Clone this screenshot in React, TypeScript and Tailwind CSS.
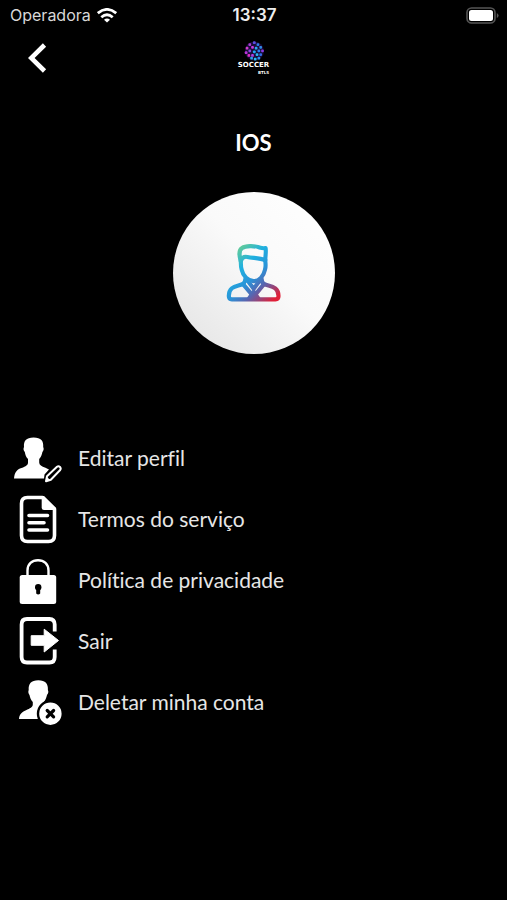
import type { ReactNode } from "react";

const menu: { label: string; icon: ReactNode }[] = [
  {
    label: "Editar perfil",
    icon: (
      <>
        <path
          fill="#fff"
          d="M0 44.5C.5 38 3 35.500 7.500 34C12 32.400 14 31 14 28.500V25C12 23 11.200 20.500 10.800 18C9.400 16.500 9.200 14.500 10 13C9.600 7 12 3.500 19.600 3.500S29.600 7 29.200 13C30 14.500 29.800 16.500 28.400 18C28 20.500 27 23 25.200 25V28.500C25.200 31 27.500 32.400 31.500 33.800L35 35.500L30.500 40.500L30 44.500Z"
        />
        <path
          fill="#000"
          stroke="#fff"
          strokeWidth="2"
          strokeLinejoin="round"
          d="M32 47.300L33 42.200L43 32.800Q44.500 31.700 46 33Q47.300 34.500 46.200 36L36.800 45.700Z"
        />
        <path fill="#fff" d="M32 47.300L32.800 42.800L36.400 46.200Z" />
      </>
    ),
  },
  {
    label: "Termos do serviço",
    icon: (
      <>
        <path
          fill="none"
          stroke="#fff"
          strokeWidth="3.600"
          strokeLinejoin="round"
          d="M28.500 2.500H13.500Q7.500 2.500 7.500 8.500V40.500Q7.500 46.500 13.500 46.500H34.500Q40.500 46.500 40.500 40.500V14Z"
        />
        <path fill="#fff" d="M27.700 1H30L42 13V15H30Q27.700 15 27.700 12.700Z" />
        <path
          stroke="#fff"
          strokeWidth="3.600"
          strokeLinecap="round"
          d="M15 20.500H33.500M15 27.700H30M15 35H33.500"
        />
      </>
    ),
  },
  {
    label: "Política de privacidade",
    icon: (
      <>
        <path
          fill="none"
          stroke="#fff"
          strokeWidth="2.400"
          d="M13.500 21V14.500C13.500 8 18 4.200 24 4.200S34.500 8 34.500 14.500V21"
        />
        <rect x="5.700" y="19" width="36.500" height="29" rx="2.500" fill="#fff" />
        <circle cx="24.200" cy="31.300" r="3.200" fill="#000" />
        <path fill="#000" d="M22.200 32H26.200V37.500Q24.200 39.500 22.200 37.500Z" />
      </>
    ),
  },
  {
    label: "Sair",
    icon: (
      <>
        <path
          fill="none"
          stroke="#fff"
          strokeWidth="3.800"
          d="M40.700 14.500V7.500Q40.700 2 35.500 2H13Q7.600 2 7.600 7.500V40Q7.600 45.500 13 45.500H35.500Q40.700 45.500 40.700 40V32.500"
        />
        <path
          fill="#fff"
          stroke="#fff"
          strokeWidth="1"
          strokeLinejoin="round"
          d="M17.200 18.700H30.200V12.200L44.500 23.500L30.200 35V28.300H17.200Z"
        />
      </>
    ),
  },
  {
    label: "Deletar minha conta",
    icon: (
      <>
        <path
          fill="#fff"
          d="M5 41C5.300 36.500 7.500 34 12 32.200C16 30.500 18.800 29 18.800 26.500V24C17 22 15.900 19.500 15.500 17C14.300 15.500 14 13.500 14.700 12C14.300 6 17 2.300 24.300 2.300S34.300 6 33.900 12C34.700 13.500 34.400 15.500 33 17C32.500 19.500 31.500 22 29.800 24L30 41Z"
        />
        <circle cx="36.400" cy="35.700" r="12.400" fill="#fff" stroke="#000" strokeWidth="2.400" />
        <path
          stroke="#000"
          strokeWidth="3.200"
          strokeLinecap="round"
          d="M33.200 32.500L39.600 38.900M39.600 32.500L33.200 38.900"
        />
      </>
    ),
  },
];

const ballPatches = [
  [10, 1, "#5b4be0"], [5, 3, "#a83ad8"], [14, 3, "#2f7be8"], [2, 7, "#d13ad0"],
  [8, 6, "#c83be0"], [12, 7, "#2aa8f0"], [17, 6, "#2f8be8"], [5, 10, "#8a45e0"],
  [10, 11, "#22a6f5"], [15, 10, "#2d7cf0"], [19, 10, "#8a3ae0"], [1, 12, "#b832d8"],
  [4, 15, "#e02cc8"], [8, 15, "#b23ae0"], [13, 14, "#28b4f0"], [17, 14, "#2f6be8"],
  [7, 18, "#2f9be8"], [11, 19, "#22b8f5"], [15, 18, "#2a8df0"],
] as const;

function StatusBar() {
  return (
    <div className="grid h-[30px] grid-cols-3 items-center pr-2 pl-[10px] font-['Inter',sans-serif] leading-[30px]">
      <div className="flex items-center gap-[6px] text-[16px] text-[#d8d8d8]">
        <span>Operadora</span>
        <svg className="h-[15px] w-5 shrink-0" viewBox="0 0 20 15" fill="none" stroke="#fff" strokeWidth="2.800">
          <path d="M.8 5.200Q10-2.400 19.200 5.200" />
          <path d="M4.300 9.200Q10 4.300 15.700 9.200" />
          <path d="M10 14.600L7 11.700Q10 9.200 13 11.700Z" fill="#fff" stroke="none" />
        </svg>
      </div>
      <time className="text-center text-[17px] font-semibold text-[#eee]">13:37</time>
      <svg className="h-[17px] w-[33px] justify-self-end" viewBox="0 0 33 17">
        <rect x="1" y="1" width="28" height="15" rx="4.500" fill="none" stroke="#555" strokeWidth="1.600" />
        <rect x="3" y="3" width="24" height="11" rx="2.500" fill="#fff" />
        <path d="M30.800 6V11Q32.600 10 32.600 8.500T30.800 6Z" fill="#555" />
      </svg>
    </div>
  );
}

export default function App() {
  return (
    <main className="min-h-screen bg-black font-['Lato',sans-serif] text-white">
      <StatusBar />

      <header className="grid h-14 grid-cols-3 items-center px-5">
        <button type="button" aria-label="Voltar" className="flex h-9 w-9 items-center pl-2">
          <svg className="h-[30px] w-5" viewBox="0 0 20 30" fill="none" stroke="#fff" strokeWidth="4.600">
            <path d="M16.500 2L3.200 15L16.500 28" />
          </svg>
        </button>
        <div className="flex flex-col items-center">
          <svg className="h-5 w-[23px]" viewBox="-2 0 24 22">
            <circle cx="11" cy="11" r="10.500" fill="#180c38" />
            {ballPatches.map(([x, y, color]) => (
              <rect key={`${x}-${y}`} x={x - 0.6} y={y - 0.6} width="3" height="3" rx="1" fill={color} />
            ))}
          </svg>
          <div className="flex flex-col items-end font-['DejaVu_Sans',sans-serif] font-bold">
            <span className="text-[7px] leading-[9px]">SOCCER</span>
            <span className="text-[4px] leading-[5px]">BTLS</span>
          </div>
        </div>
      </header>

      <section className="flex flex-col items-center pt-[42px]">
        <h1 className="text-[22px] leading-[30px] font-bold">IOS</h1>
        <div className="mt-[34px] flex h-[162px] w-[162px] items-center justify-center rounded-full bg-linear-to-tr from-[#e2e2e2] via-[#fafafa] via-55% to-white">
          <svg
            className="h-[58px] w-[55px]"
            viewBox="50 55 165 175"
            fill="none"
            stroke="url(#avatar)"
            strokeWidth="12.500"
            strokeLinejoin="round"
            strokeLinecap="round"
          >
            <defs>
              <linearGradient id="avatar" gradientUnits="userSpaceOnUse" x1="85" y1="75" x2="208" y2="210">
                <stop offset="0" stopColor="#5cc9a0" />
                <stop offset="0.250" stopColor="#1fb0e0" />
                <stop offset="0.500" stopColor="#2a94d8" />
                <stop offset="0.700" stopColor="#5865b0" />
                <stop offset="1" stopColor="#e01f38" />
              </linearGradient>
            </defs>
            <path d="M169 67C162 69 156 67 149 65C135 60 108 60 98 67C86 75 90 92 94 107C98 94 105 92 114 94C130 98 150 96 168 104C168 92 171 80 169 67Z" />
            <path d="M94 102C95 112 93 122 97 133C101 152 116 167 133 167S163 152 167 133C171 121 168 112 168 102" />
            <path d="M103 174C88 184 58 178 58 212Q58 222 67 222H199Q208 222 208 212C208 178 176 184 161 174" />
            <path d="M108 160C108 168 105 172 101 176L133 214L164 176C159 172 157 168 157 160M115 166L133 190L151 166" />
            <path d="M133 199L119 219H147Z" fill="url(#avatar)" />
          </svg>
        </div>
      </section>

      <nav className="mt-[74px] flex flex-col">
        {menu.map(({ label, icon }) => (
          <button
            key={label}
            type="button"
            className="flex h-[61px] w-full items-center gap-4 px-[14px] text-left text-[21px] leading-[29px] text-[#e6e6e6] [font-variant-ligatures:none]"
          >
            <svg className="h-[49px] w-12 shrink-0" viewBox="0 0 48 49" aria-hidden="true">
              {icon}
            </svg>
            <span className="pb-[3px]">{label}</span>
          </button>
        ))}
      </nav>
    </main>
  );
}
